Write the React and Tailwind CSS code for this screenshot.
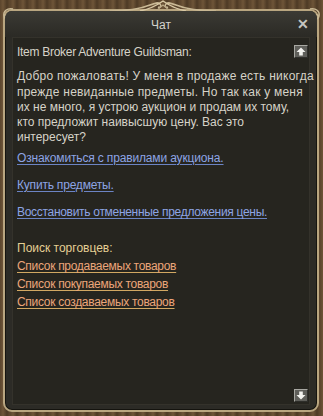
import React from "react";

function ArrowBtn({ down }) {
  return (
    <div className="w-[14px] h-[13px] bg-[#5f5f5a] border border-t-[#a8a8a2] border-l-[#a8a8a2] border-r-[#2e2e2a] border-b-[#2e2e2a] flex items-center justify-center">
      <svg width="10" height="9" viewBox="0 0 10 9" className={down ? "rotate-180" : ""}>
        <path d="M5 0.5 L9.5 5 L6.8 5 L6.8 8.5 L3.2 8.5 L3.2 5 L0.5 5 Z" fill="#f2f2ee" />
      </svg>
    </div>
  );
}

export default function App() {
  return (
    <div
      className="relative w-[323px] h-[416px] overflow-hidden bg-[repeating-linear-gradient(90deg,#5b452d_0px,#6e5538_3px,#4d3a25_7px,#614a30_10px)] pt-[9px] pl-[3px] pr-[4px] pb-[4px] font-['Liberation_Sans',sans-serif]"
    >
      {/* top ornament */}
      <svg className="absolute left-[100px] top-0" width="126" height="14" viewBox="0 0 126 14">
        <path d="M10 11 C30 11 40 9 50 5 C55 3 58 2 60 4 C62 6 60 8 58 7" fill="none" stroke="#c9b894" strokeWidth="1.6" />
        <path d="M116 11 C96 11 86 9 76 5 C71 3 68 2 66 4 C64 6 66 8 68 7" fill="none" stroke="#c9b894" strokeWidth="1.6" />
        <path d="M40 11 C50 9 56 6 63 1 C70 6 76 9 86 11" fill="none" stroke="#d8c8a4" strokeWidth="1.4" />
        <path d="M56 11 L63 5 L70 11" fill="none" stroke="#b8a684" strokeWidth="1.2" />
      </svg>
      <svg className="absolute left-0 top-[2px]" width="16" height="30" viewBox="0 0 16 30">
        <path d="M13 7 C7 6 3 9 4 14 C5 18 9 18 9 15 C9 12 6 12 5 14" fill="none" stroke="#c9b894" strokeWidth="1.5" />
      </svg>
      <svg className="absolute right-0 top-[2px]" width="16" height="30" viewBox="0 0 16 30">
        <path d="M3 7 C9 6 13 9 12 14 C11 18 7 18 7 15 C7 12 10 12 11 14" fill="none" stroke="#c9b894" strokeWidth="1.5" />
      </svg>
      <div className="h-full rounded-[9px] border-2 border-[#b9a680] bg-[#2c2b26] shadow-[inset_0_0_0_1px_#15140f] flex flex-col">
        <div className="relative h-[26px] shrink-0 flex items-center justify-center bg-[linear-gradient(180deg,#3b3a34,#2b2a25)] rounded-t-[7px]">
          <span className="text-[12px] text-[#d4d3cc] leading-none mt-[2px]">Чат</span>
          <span className="absolute right-[8px] top-[6px] text-[#c6c6c0] text-[14px] font-bold leading-none">✕</span>
        </div>
        <div className="flex-1 mx-[7px] mb-[5px] bg-[#26251f] border border-[#34322b] flex">
          <div className="flex-1 min-w-0 pl-[4px] pt-[7px] text-[12px] leading-[15.3px] text-[#d6d3c8] flex flex-col items-start">
            <div className="tracking-[-0.28px]">Item Broker Adventure Guildsman:</div>
            <div className="mt-[9px] whitespace-nowrap">
              <div className="tracking-[0.25px]">Добро пожаловать! У меня в продаже есть никогда</div>
              <div className="tracking-[0.22px]">прежде невиданные предметы. Но так как у меня</div>
              <div>их не много, я устрою аукцион и продам их тому,</div>
              <div>кто предложит наивысшую цену. Вас это</div>
              <div>интересует?</div>
            </div>
            <div className="mt-[5px] tracking-[-0.15px] text-[#8da4e4] underline underline-offset-2 decoration-[#6c84c4]">Ознакомиться с правилами аукциона.</div>
            <div className="mt-[11.7px] tracking-[-0.2px] text-[#8da4e4] underline underline-offset-2 decoration-[#6c84c4]">Купить предметы.</div>
            <div className="mt-[12.4px] tracking-[-0.3px] text-[#8da4e4] underline underline-offset-2 decoration-[#6c84c4]">Восстановить отмененные предложения цены.</div>
            <div className="mt-[20px] text-[#e4cf94]">Поиск торговцев:</div>
            <div className="mt-[3px] tracking-[-0.3px] text-[#eca57a] underline underline-offset-2 decoration-[#d2a862]">Список продаваемых товаров</div>
            <div className="mt-[3px] tracking-[-0.3px] text-[#eca57a] underline underline-offset-2 decoration-[#d2a862]">Список покупаемых товаров</div>
            <div className="mt-[2.5px] tracking-[-0.3px] text-[#eca57a] underline underline-offset-2 decoration-[#d2a862]">Список создаваемых товаров</div>
          </div>
          <div className="w-[18px] shrink-0 flex flex-col justify-between items-end pr-[1px] pt-[7px] pb-[2px]">
            <ArrowBtn />
            <ArrowBtn down />
          </div>
        </div>
      </div>
    </div>
  );
}
